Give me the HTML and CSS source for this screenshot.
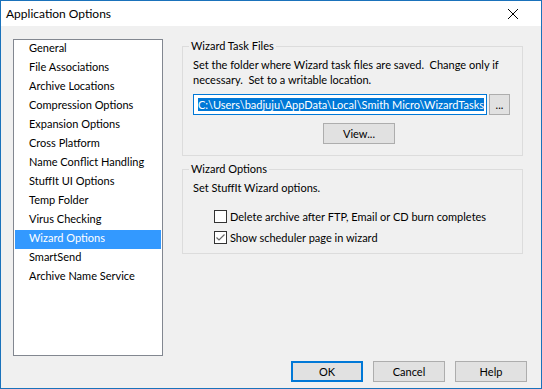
FILE: index.html
```html
<!DOCTYPE html>
<html lang="en">
<head>
    <meta charset="UTF-8">
    <title>Application Options</title>
    <link rel="stylesheet" href="styles.css">
</head>
<body>
    <div class="window">
        <div class="titlebar">
            <span class="title">Application Options</span>
            <svg class="close" width="12" height="12" viewBox="0 0 12 12">
                <path d="M1 1 L11 11 M11 1 L1 11" stroke="#000" stroke-width="1" fill="none"/>
            </svg>
        </div>
        <div class="content">
            <div class="main">
                <ul class="pages">
                    <li>General</li>
                    <li>File Associations</li>
                    <li>Archive Locations</li>
                    <li>Compression Options</li>
                    <li>Expansion Options</li>
                    <li>Cross Platform</li>
                    <li>Name Conflict Handling</li>
                    <li>StuffIt UI Options</li>
                    <li>Temp Folder</li>
                    <li>Virus Checking</li>
                    <li class="selected">Wizard Options</li>
                    <li>SmartSend</li>
                    <li>Archive Name Service</li>
                </ul>
                <div class="panel">
                    <fieldset class="group task-files">
                        <legend>Wizard Task Files</legend>
                        <p class="desc">Set the folder where Wizard task files are saved.&nbsp; Change only if necessary.&nbsp; Set to a writable location.</p>
                        <div class="path-row">
                            <div class="path"><span class="sel">C:\Users\badjuju\AppData\Local\Smith Micro\WizardTasks</span></div>
                            <button class="btn browse">...</button>
                        </div>
                        <div class="view-row">
                            <button class="btn view">View...</button>
                        </div>
                    </fieldset>
                    <fieldset class="group wizard-opts">
                        <legend>Wizard Options</legend>
                        <p class="desc">Set StuffIt Wizard options.</p>
                        <label class="check"><span class="box"></span>Delete archive after FTP, Email or CD burn completes</label>
                        <label class="check"><span class="box">
                            <svg width="11" height="11" viewBox="0 0 11 11"><path d="M1.5 5.5 L4 8 L9.5 2.5" stroke="#666" stroke-width="1.2" fill="none"/></svg>
                        </span>Show scheduler page in wizard</label>
                    </fieldset>
                </div>
            </div>
            <div class="buttons">
                <button class="btn default">OK</button>
                <button class="btn">Cancel</button>
                <button class="btn">Help</button>
            </div>
        </div>
    </div>
</body>
</html>
```

FILE: styles.css
```css
body{
    margin: 0;
    padding: 0;
    font-family: Lato, "Liberation Sans", sans-serif;
    font-size: 11px;
    color: #000;
}

.window{
    width: 542px;
    height: 389px;
    box-sizing: border-box;
    border: 1px solid #1a72bb;
    display: flex;
    flex-direction: column;
}

.titlebar{
    height: 25px;
    background: #fff;
    display: flex;
    align-items: center;
    padding-left: 5px;
    padding-right: 22px;
}
.title{
    flex: 1;
    font-size: 12px;
}
.close{
    display: block;
}

.content{
    flex: 1;
    background: #f0f0f0;
    display: flex;
    flex-direction: column;
    padding: 13px 13px 6px 12px;
}

.main{
    display: flex;
    gap: 19px;
}

.pages{
    list-style: none;
    margin: 0;
    padding: 0 1px;
    width: 150px;
    height: 317px;
    box-sizing: border-box;
    border: 1px solid #828790;
    background: #fff;
}
.pages li{
    height: 19px;
    line-height: 15px;
    padding-left: 14px;
}
.pages li.selected{
    background: #3399ff;
    color: #fff;
    line-height: 16px;
}

.panel{
    width: 341px;
}

.group{
    margin: 0;
    padding: 0 11px 0 10px;
    border: 1px solid #dcdcdc;
    min-width: 0;
}
.group legend{
    padding: 0 2px;
    margin-left: -4px;
    line-height: 14px;
}

.task-files{
    height: 117px;
    box-sizing: border-box;
}
.wizard-opts{
    margin-top: 6px;
    height: 92px;
    box-sizing: border-box;
}

.desc{
    margin: 4px 0 0 0;
    line-height: 15px;
}

.path-row{
    display: flex;
    gap: 2px;
    margin-top: 7px;
}
.path{
    width: 294px;
    height: 21px;
    box-sizing: border-box;
    border: 1px solid #0078d7;
    background: #fff;
    padding: 2px 4px;
    line-height: 15px;
    white-space: nowrap;
    overflow: hidden;
}
.sel{
    background: #0078d7;
    color: #fff;
}

.btn{
    font-family: inherit;
    font-size: 11px;
    background: #e1e1e1;
    border: 1px solid #adadad;
    box-sizing: border-box;
    padding: 0;
    color: #000;
}
.browse{
    width: 21px;
    height: 21px;
    line-height: 12px;
}
.view-row{
    display: flex;
    justify-content: center;
    margin-top: 8px;
}
.view{
    width: 72px;
    height: 21px;
    margin-left: 14px;
}

.check{
    display: flex;
    align-items: center;
    margin-left: 21px;
    height: 15px;
    margin-top: 14px;
}
.check + .check{
    margin-top: 6px;
}
.box{
    width: 13px;
    height: 13px;
    box-sizing: border-box;
    border: 1px solid #333;
    background: #fff;
    margin-right: 3px;
    display: flex;
    align-items: center;
    justify-content: center;
}
.box svg{
    display: block;
}

.buttons{
    margin-top: auto;
    display: flex;
    justify-content: flex-end;
    gap: 10px;
    padding-right: 1px;
}
.buttons .btn{
    width: 72px;
    height: 21px;
}
.buttons .default{
    border: 2px solid #0078d7;
}
```
